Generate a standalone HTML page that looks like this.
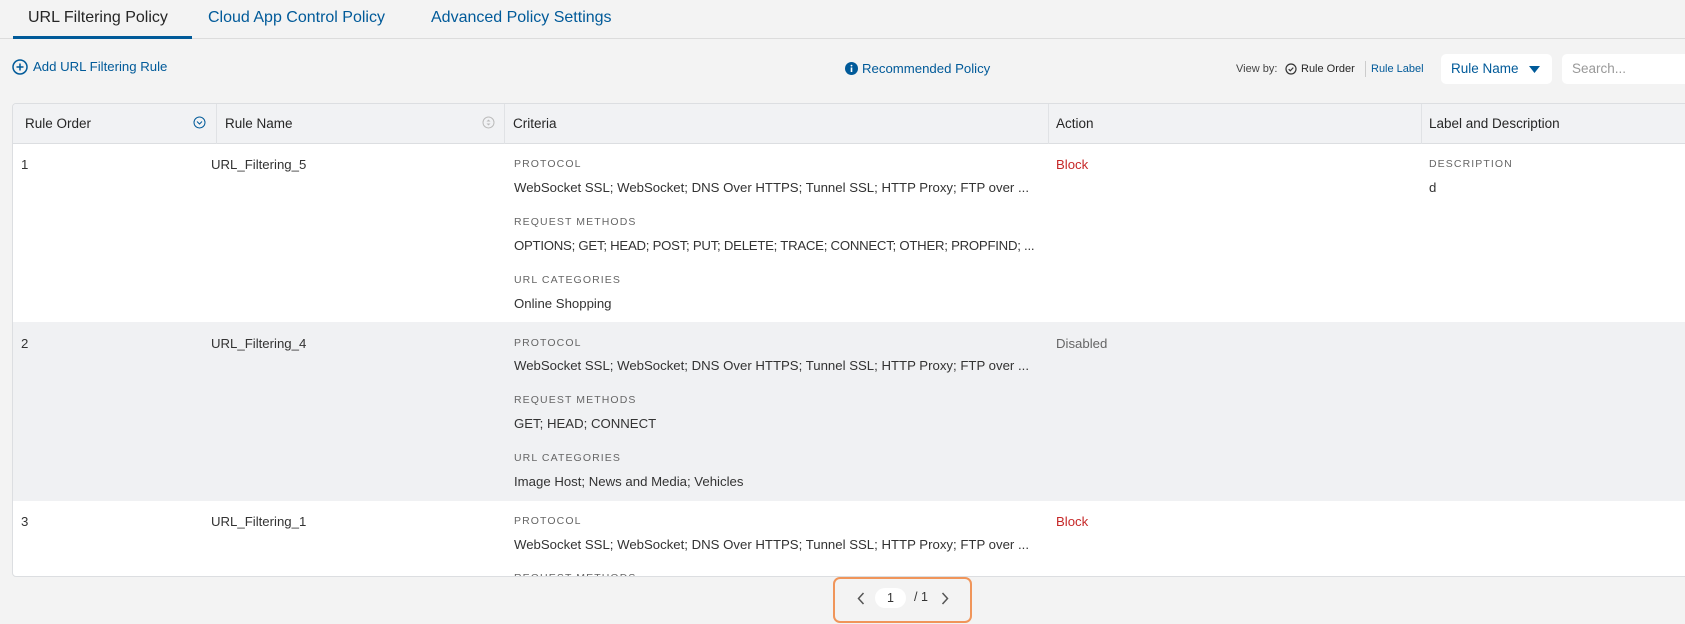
<!DOCTYPE html>
<html><head><meta charset="utf-8"><style>
*{margin:0;padding:0;box-sizing:border-box}
body{width:1685px;height:624px;overflow:hidden;background:#f3f3f3;font-family:"Liberation Sans",sans-serif;color:#262626;position:relative}
.a{position:absolute;white-space:nowrap}
.tab{font-size:16px;color:#005a99;top:9px}
.lbl{font-size:10.5px;letter-spacing:1.1px;color:#666}
.v{font-size:13.2px;color:#333}
.hd{font-size:13.5px;color:#262626}
.vl{position:absolute;width:1px;background:#e0e2e5}
</style></head><body>
<div class="a tab" style="left:28px;color:#262626">URL Filtering Policy</div>
<div class="a tab" style="left:208px">Cloud App Control Policy</div>
<div class="a tab" style="left:431px">Advanced Policy Settings</div>
<div class="a" style="left:0;top:38px;width:1685px;height:1px;background:#dcdcdc"></div>
<div class="a" style="left:13px;top:36px;width:179px;height:3px;background:#005a99"></div>

<svg class="a" style="left:12px;top:59px" width="16" height="16" viewBox="0 0 16 16"><circle cx="8" cy="8" r="7" fill="none" stroke="#005a99" stroke-width="1.5"/><path d="M8 4.5v7M4.5 8h7" stroke="#005a99" stroke-width="1.5"/></svg>
<div class="a" style="left:33px;top:59px;font-size:13.2px;color:#005a99">Add URL Filtering Rule</div>

<svg class="a" style="left:845px;top:62px" width="13" height="13" viewBox="0 0 13 13"><circle cx="6.5" cy="6.5" r="6.5" fill="#005a99"/><path d="M6.5 5.5v4.5" stroke="#fff" stroke-width="1.6"/><circle cx="6.5" cy="3.6" r="0.9" fill="#fff"/></svg>
<div class="a" style="left:862px;top:61px;font-size:13.2px;color:#005a99">Recommended Policy</div>

<div class="a" style="left:1236px;top:63px;font-size:11px;color:#444">View by:</div>
<svg class="a" style="left:1285px;top:63px" width="12" height="12" viewBox="0 0 12 12"><circle cx="6" cy="6" r="5" fill="none" stroke="#333" stroke-width="1.2"/><path d="M3.7 6.2l1.6 1.6 3-3.2" fill="none" stroke="#333" stroke-width="1.2"/></svg>
<div class="a" style="left:1301px;top:63px;font-size:11px;color:#262626">Rule Order</div>
<div class="a" style="left:1365px;top:61px;width:1px;height:16px;background:#ccc"></div>
<div class="a" style="left:1371px;top:63px;font-size:11px;color:#005a99">Rule Label</div>
<div class="a" style="left:1441px;top:54px;width:111px;height:30px;background:#fff;border-radius:5px"></div>
<div class="a" style="left:1451px;top:61px;font-size:13.5px;color:#005a99">Rule Name</div>
<svg class="a" style="left:1529px;top:66px" width="11" height="7"><path d="M0 0h11L5.5 7z" fill="#005a99"/></svg>
<div class="a" style="left:1562px;top:54px;width:140px;height:30px;background:#fff;border-radius:5px"></div>
<div class="a" style="left:1572px;top:61px;font-size:13.5px;color:#999">Search...</div>

<div class="a" style="left:12px;top:103px;width:1700px;height:474px;background:#fff;border:1px solid #dcdee1;border-radius:4px;overflow:hidden">
 <div class="a" style="left:0;top:0;width:1700px;height:40px;background:#f1f2f4;border-bottom:1px solid #dcdee1"></div>
 <div class="a" style="left:0;top:218px;width:1700px;height:179px;background:#f0f1f3"></div>
 <div class="vl" style="left:203px;top:0;height:40px"></div>
 <div class="vl" style="left:491px;top:0;height:40px"></div>
 <div class="vl" style="left:1035px;top:0;height:40px"></div>
 <div class="vl" style="left:1408px;top:0;height:40px"></div>
</div>
<div class="a hd" style="left:25px;top:116px">Rule Order</div>
<svg class="a" style="left:193px;top:116px" width="13" height="13"><circle cx="6.5" cy="6.5" r="5.5" fill="none" stroke="#005a99" stroke-width="1"/><path d="M4 5.5l2.5 2.5 2.5-2.5" fill="none" stroke="#005a99" stroke-width="1"/></svg>
<div class="a hd" style="left:225px;top:116px">Rule Name</div>
<svg class="a" style="left:482px;top:116px" width="13" height="13"><circle cx="6.5" cy="6.5" r="5.5" fill="none" stroke="#bbb" stroke-width="1"/><path d="M4.5 5.5l2-2 2 2zM4.5 7.5l2 2 2-2z" fill="#bbb"/></svg>
<div class="a hd" style="left:513px;top:116px">Criteria</div>
<div class="a hd" style="left:1056px;top:116px">Action</div>
<div class="a hd" style="left:1429px;top:116px">Label and Description</div>

<!-- row1 -->
<div class="a v" style="left:21px;top:157px">1</div>
<div class="a v" style="left:211px;top:157px">URL_Filtering_5</div>
<div class="a lbl" style="left:514px;top:158px">PROTOCOL</div>
<div class="a v" style="left:514px;top:180px">WebSocket SSL; WebSocket; DNS Over HTTPS; Tunnel SSL; HTTP Proxy; FTP over ...</div>
<div class="a lbl" style="left:514px;top:216px">REQUEST METHODS</div>
<div class="a v" style="left:514px;top:238px;letter-spacing:-0.25px">OPTIONS; GET; HEAD; POST; PUT; DELETE; TRACE; CONNECT; OTHER; PROPFIND; ...</div>
<div class="a lbl" style="left:514px;top:274px">URL CATEGORIES</div>
<div class="a v" style="left:514px;top:296px">Online Shopping</div>
<div class="a v" style="left:1056px;top:157px;color:#c62828">Block</div>
<div class="a lbl" style="left:1429px;top:158px">DESCRIPTION</div>
<div class="a v" style="left:1429px;top:180px">d</div>

<!-- row2 -->
<div class="a v" style="left:21px;top:336px">2</div>
<div class="a v" style="left:211px;top:336px">URL_Filtering_4</div>
<div class="a lbl" style="left:514px;top:337px">PROTOCOL</div>
<div class="a v" style="left:514px;top:358px">WebSocket SSL; WebSocket; DNS Over HTTPS; Tunnel SSL; HTTP Proxy; FTP over ...</div>
<div class="a lbl" style="left:514px;top:394px">REQUEST METHODS</div>
<div class="a v" style="left:514px;top:416px">GET; HEAD; CONNECT</div>
<div class="a lbl" style="left:514px;top:452px">URL CATEGORIES</div>
<div class="a v" style="left:514px;top:474px">Image Host; News and Media; Vehicles</div>
<div class="a v" style="left:1056px;top:336px;color:#666">Disabled</div>

<!-- row3 -->
<div class="a v" style="left:21px;top:514px">3</div>
<div class="a v" style="left:211px;top:514px">URL_Filtering_1</div>
<div class="a lbl" style="left:514px;top:515px">PROTOCOL</div>
<div class="a v" style="left:514px;top:537px">WebSocket SSL; WebSocket; DNS Over HTTPS; Tunnel SSL; HTTP Proxy; FTP over ...</div>
<div class="a v" style="left:1056px;top:514px;color:#c62828">Block</div>
<div class="a lbl" style="left:514px;top:572px;height:4px;overflow:hidden">REQUEST METHODS</div>

<!-- pagination -->
<div class="a" style="left:833px;top:577px;width:139px;height:46px;border:2.5px solid #f0955a;border-radius:7px"></div>
<svg class="a" style="left:857px;top:592px" width="8" height="13"><path d="M6.5 1L1.5 6.5 6.5 12" fill="none" stroke="#555" stroke-width="1.5"/></svg>
<div class="a" style="left:875px;top:588px;width:31px;height:20px;background:#fff;border-radius:10px;font-size:12.5px;text-align:center;line-height:20px;color:#333">1</div>
<div class="a" style="left:914px;top:590px;font-size:12.5px;color:#333">/ 1</div>
<svg class="a" style="left:941px;top:592px" width="8" height="13"><path d="M1.5 1L6.5 6.5 1.5 12" fill="none" stroke="#555" stroke-width="1.5"/></svg>
</body></html>
